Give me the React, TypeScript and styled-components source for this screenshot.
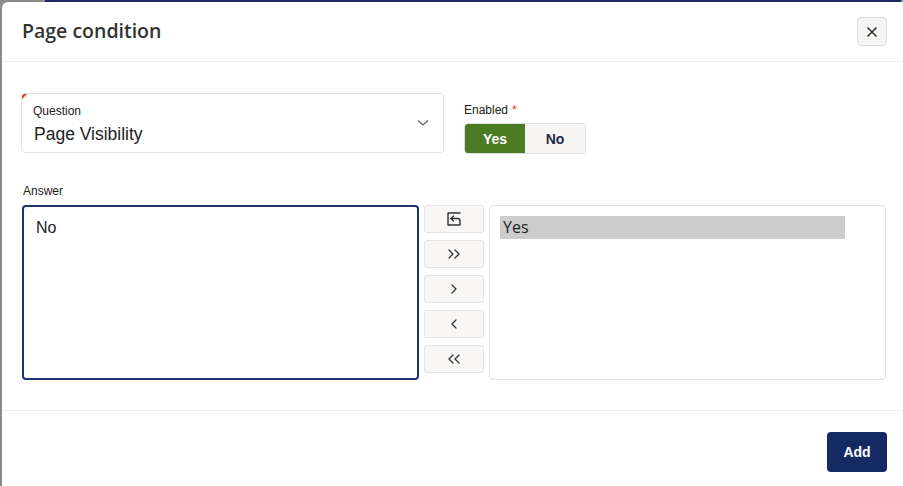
import React from "react";
import styled, { createGlobalStyle } from "styled-components";

const Global = createGlobalStyle`
  html, body { margin: 0; padding: 0; background: #ffffff; }
  body { width: 903px; height: 486px; overflow: hidden; font-family: "Liberation Sans", Arial, sans-serif; }
  * { box-sizing: border-box; }
`;

const Backdrop = styled.div`
  width: 903px;
  height: 486px;
  padding: 2px 0 0 2px;
  background: linear-gradient(to right, #8a8a8a 45px, #1b2a5c 45px) top left / 901px 2px no-repeat, #8c8c8c;
  display: flex;
`;

const Modal = styled.div`
  flex: 1;
  background: #fff;
  border-top-left-radius: 6px;
  display: flex;
  flex-direction: column;
`;

const Header = styled.div`
  height: 60px;
  display: flex;
  align-items: center;
  justify-content: space-between;
  padding: 0 16px 0 20px;
  border-bottom: 1px solid #ececec;
`;

const Title = styled.h1`
  margin: 0;
  font-family: "Open Sans", sans-serif;
  font-weight: 600;
  font-size: 19.5px;
  color: #333;
  margin-top: -2px;
`;

const CloseButton = styled.button`
  width: 30px;
  height: 29px;
  border: 1px solid #dcdcdc;
  border-radius: 4px;
  background: #f7f6f5;
  display: flex;
  align-items: center;
  justify-content: center;
  padding: 0;
  margin-top: 0;
`;

const Body = styled.div`
  padding: 31px 16px 0 19px;
  display: flex;
  flex-direction: column;
`;

const TopRow = styled.div`
  display: flex;
  gap: 20px;
`;

const Select = styled.div`
  position: relative;
  width: 423px;
  height: 60px;
  border: 1px solid #e2e2e2;
  border-radius: 4px;
  padding: 10px 12px 0 11px;
  display: flex;
  flex-direction: column;
  overflow: hidden;
  &::before {
    content: "";
    position: absolute;
    left: 0;
    top: 0;
    border-top: 5px solid #d9381e;
    border-right: 5px solid transparent;
  }
`;

const SmallLabel = styled.div`
  font-size: 12px;
  color: #222;
  line-height: 14px;
`;

const SelectValue = styled.div`
  font-size: 17.5px;
  color: #222;
  margin-top: 6px;
  margin-left: 1px;
`;

const Chevron = styled.svg`
  position: absolute;
  right: 14px;
  top: 25px;
`;

const Field = styled.div`
  display: flex;
  flex-direction: column;
  padding-top: 10px;
`;

const Required = styled.span`
  color: #d9381e;
  margin-left: 4px;
`;

const Toggle = styled.div`
  display: flex;
  margin-top: 6px;
  width: 122px;
  height: 31px;
  border: 1px solid #dedede;
  border-radius: 4px;
  overflow: hidden;
`;

const ToggleOption = styled.div<{ $active?: boolean }>`
  flex: 1;
  display: flex;
  align-items: center;
  justify-content: center;
  font-size: 14px;
  font-weight: 700;
  background: ${(p) => (p.$active ? "#4b7b22" : "#f7f5f3")};
  color: ${(p) => (p.$active ? "#ffffff" : "#1f2a44")};
`;

const AnswerLabel = styled(SmallLabel)`
  margin-top: 30px;
  margin-left: 2px;
`;

const Lists = styled.div`
  display: grid;
  grid-template-columns: 397px 60px 397px;
  column-gap: 5px;
  margin-top: 7px;
  margin-left: 1px;
  height: 175px;
`;

const LeftList = styled.div`
  border: 2px solid #1f3366;
  border-radius: 4px;
  padding: 12px 12px;
  font-size: 16px;
  color: #222;
`;

const RightList = styled.div`
  border: 1px solid #e2e2e2;
  border-radius: 4px;
  padding: 10px 40px 0 10px;
`;

const Option = styled.div<{ $selected?: boolean }>`
  background: ${(p) => (p.$selected ? "#cccccc" : "transparent")};
  font-family: "Open Sans", sans-serif;
  font-size: 16px;
  color: #222;
  height: 23px;
  line-height: 23px;
  padding-left: 3px;
`;

const Shuttle = styled.div`
  display: flex;
  flex-direction: column;
  gap: 7px;
`;

const ShuttleButton = styled.button`
  height: 28px;
  border: 1px solid #e4e4e4;
  border-radius: 3px;
  background: #f8f7f6;
  display: flex;
  align-items: center;
  justify-content: center;
  padding: 0;
`;

const Footer = styled.div`
  margin-top: 30px;
  border-top: 1px solid #ececec;
  display: flex;
  justify-content: flex-end;
  padding: 21px 16px 0 0;
`;

const AddButton = styled.button`
  width: 60px;
  height: 40px;
  border: none;
  border-radius: 4px;
  background: #152a63;
  color: #fff;
  font-family: "Liberation Sans", Arial, sans-serif;
  font-weight: 700;
  font-size: 14px;
`;

const stroke = { fill: "none", stroke: "#333", strokeWidth: 1.3, strokeLinecap: "round" as const, strokeLinejoin: "round" as const };

const Chev = ({ dir, double }: { dir: "l" | "r"; double?: boolean }) => {
  const one = (x: number) =>
    dir === "r" ? `M${x} 2 L${x + 4} 6 L${x} 10` : `M${x + 4} 2 L${x} 6 L${x + 4} 10`;
  return (
    <svg width={double ? 14 : 8} height="12" viewBox={double ? "0 0 14 12" : "0 0 8 12"}>
      {double ? (
        <>
          <path d={one(2)} {...stroke} />
          <path d={one(8)} {...stroke} />
        </>
      ) : (
        <path d={one(2)} {...stroke} />
      )}
    </svg>
  );
};

export default function App() {
  return (
    <>
      <Global />
      <Backdrop>
        <Modal>
          <Header>
            <Title>Page condition</Title>
            <CloseButton aria-label="Close">
              <svg width="12" height="12" viewBox="0 0 12 12">
                <path d="M1.5 1.5 L10.5 10.5 M10.5 1.5 L1.5 10.5" fill="none" stroke="#333" strokeWidth="1.6" />
              </svg>
            </CloseButton>
          </Header>
          <Body>
            <TopRow>
              <Select>
                <SmallLabel>Question</SmallLabel>
                <SelectValue>Page Visibility</SelectValue>
                <Chevron width="12" height="8" viewBox="0 0 12 8">
                  <path d="M1 1.5 L6 6 L11 1.5" fill="none" stroke="#666" strokeWidth="1.3" />
                </Chevron>
              </Select>
              <Field>
                <SmallLabel>
                  Enabled<Required>*</Required>
                </SmallLabel>
                <Toggle>
                  <ToggleOption $active>Yes</ToggleOption>
                  <ToggleOption>No</ToggleOption>
                </Toggle>
              </Field>
            </TopRow>
            <AnswerLabel>Answer</AnswerLabel>
            <Lists>
              <LeftList>No</LeftList>
              <Shuttle>
                <ShuttleButton aria-label="Reset">
                  <svg width="16" height="16" viewBox="0 0 16 16">
                    <path d="M14 2 H2 V14 H14 V10 Q14 7.5 11.5 7.5 H5" {...stroke} strokeWidth={1.4} />
                    <path d="M7.5 5 L5 7.5 L7.5 10" {...stroke} strokeWidth={1.4} />
                  </svg>
                </ShuttleButton>
                <ShuttleButton aria-label="Move all">
                  <Chev dir="r" double />
                </ShuttleButton>
                <ShuttleButton aria-label="Move">
                  <Chev dir="r" />
                </ShuttleButton>
                <ShuttleButton aria-label="Remove">
                  <Chev dir="l" />
                </ShuttleButton>
                <ShuttleButton aria-label="Remove all">
                  <Chev dir="l" double />
                </ShuttleButton>
              </Shuttle>
              <RightList>
                <Option $selected>Yes</Option>
              </RightList>
            </Lists>
          </Body>
          <Footer>
            <AddButton>Add</AddButton>
          </Footer>
        </Modal>
      </Backdrop>
    </>
  );
}
